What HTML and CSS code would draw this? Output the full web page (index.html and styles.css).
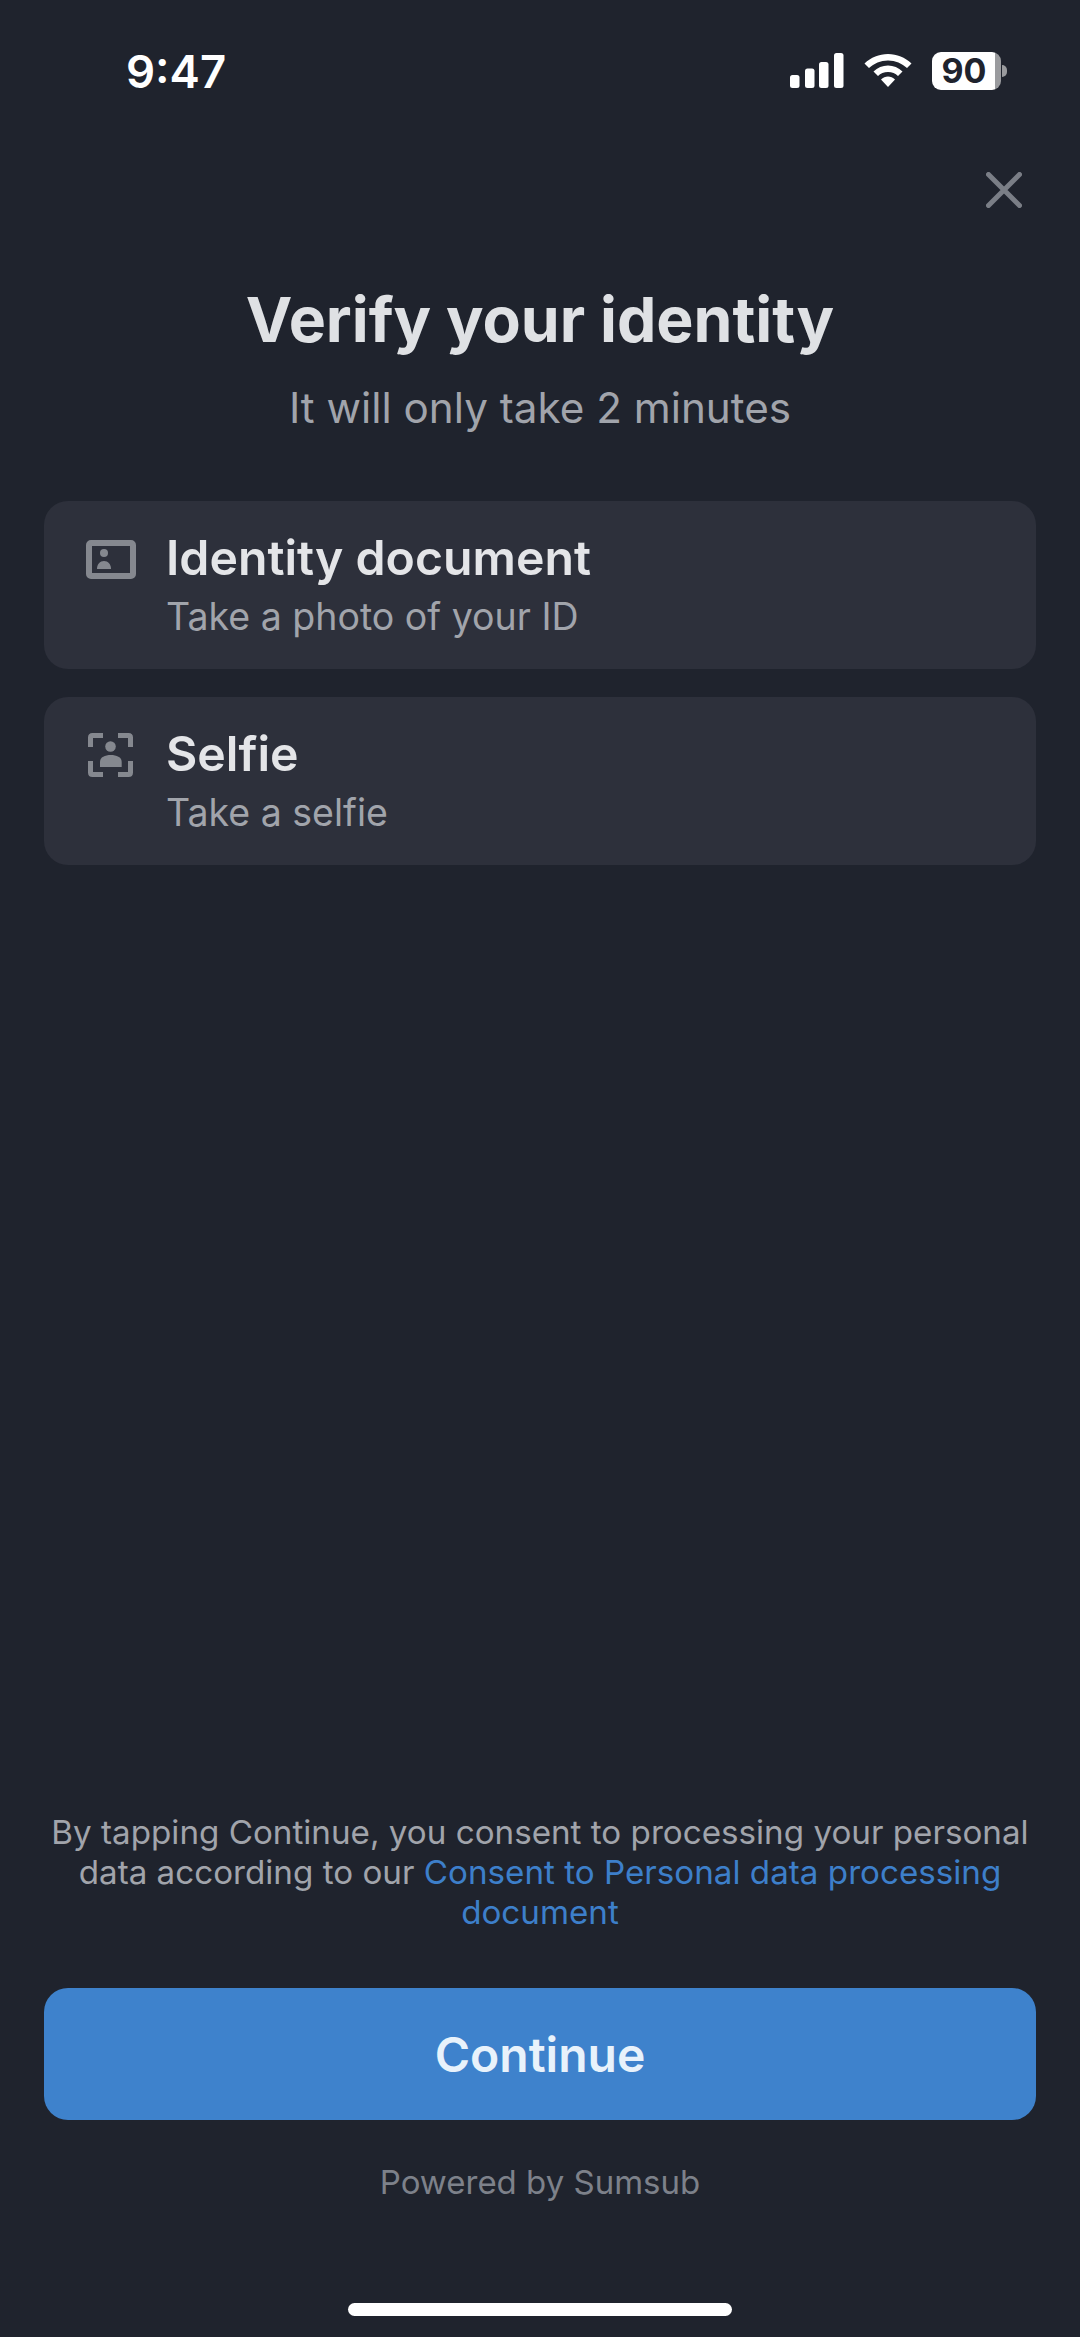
FILE: index.html
```html
<!DOCTYPE html>
<html lang="en">
<head>
<meta charset="utf-8">
<title>Verify your identity</title>
<link rel="stylesheet" href="styles.css">
</head>
<body>
<div class="screen">
  <header class="status">
    <span class="time">9:47</span>
    <div class="status-icons">
      <svg class="signal" width="54" height="36" viewBox="0 0 54 36"><rect x="0" y="22" width="9.500" height="13" rx="2.500"/><rect x="15" y="15.500" width="9.500" height="19.500" rx="2.500"/><rect x="29" y="9" width="9.500" height="26" rx="2.500"/><rect x="44" y="0" width="9.500" height="35" rx="2.500"/></svg>
      <svg class="wifi" width="48" height="36" viewBox="0 0 48 36"><path d="M24 1C33 1 41 4.500 47.500 10.500L43 15C38 10.500 31.500 7.500 24 7.500C16.500 7.500 10 10.500 5 15L0.500 10.500C7 4.500 15 1 24 1Z"/><path d="M24 12.500C29.500 12.500 34.500 14.500 38.500 18.500L34 23C31.500 20.500 28 19 24 19C20 19 16.500 20.500 14 23L9.500 18.500C13.500 14.500 18.500 12.500 24 12.500Z"/><path d="M24 23.500C26.500 23.500 29 24.500 31 26.500L24 34L17 26.500C19 24.500 21.500 23.500 24 23.500Z"/></svg>
      <div class="battery"><div class="battery-body"><span class="battery-level">90</span></div><span class="battery-cap"></span></div>
    </div>
  </header>
  <div class="close-row">
    <svg width="36" height="36" viewBox="0 0 36 36" fill="none"><path d="M2.500 2.500L33.500 33.500M33.500 2.500L2.500 33.500" stroke="#7a7e86" stroke-width="5" stroke-linecap="round"/></svg>
  </div>
  <h1 class="title">Verify your identity</h1>
  <p class="subtitle">It will only take 2 minutes</p>
  <div class="steps">
    <div class="step">
      <svg class="step-icon" width="52" height="46" viewBox="0 0 52 46"><rect x="3" y="8" width="44" height="33" rx="2" fill="none" stroke="#85888f" stroke-width="6"/><circle cx="18" cy="18" r="4" fill="#85888f"/><path d="M11 34C11 29 14 26 18 26C22 26 25 29 25 34Z" fill="#85888f"/></svg>
      <div class="step-text">
        <div class="step-title">Identity document</div>
        <div class="step-sub">Take a photo of your ID</div>
      </div>
    </div>
    <div class="step">
      <svg class="step-icon" width="52" height="46" viewBox="0 0 52 46" fill="none"><path d="M4.500 16V6.500Q4.500 4.500 6.500 4.500H17M32 4.500H42.500Q44.500 4.500 44.500 6.500V16M4.500 30V41.500Q4.500 43.500 6.500 43.500H17M32 43.500H42.500Q44.500 43.500 44.500 41.500V30" stroke="#85888f" stroke-width="5"/><circle cx="24.500" cy="15.500" r="5.300" fill="#85888f"/><path d="M14 36V31C14 26 19 24 24.800 24C30.500 24 35.700 26 35.700 31V36Z" fill="#85888f"/></svg>
      <div class="step-text">
        <div class="step-title">Selfie</div>
        <div class="step-sub">Take a selfie</div>
      </div>
    </div>
  </div>
  <div class="spacer"></div>
  <p class="consent">By tapping Continue, you consent to processing your personal data according to our <a class="link">Consent to Personal data processing document</a></p>
  <button class="cta">Continue</button>
  <p class="powered">Powered by Sumsub</p>
  <div class="home-wrap"><div class="home"></div></div>
</div>
</body>
</html>
```

FILE: styles.css
```css
* { box-sizing: border-box; }
html, body { margin: 0; padding: 0; }
body { background: #1f232d; font-family: Inter, "Noto Sans", sans-serif; }
.screen { width: 1080px; height: 2337px; display: flex; flex-direction: column; background: #1f232d; color: #e4e5e8; overflow: hidden; }
.status { height: 144px; display: flex; justify-content: space-between; align-items: flex-start; padding: 46px 0 0 126px; flex: none; }
.time { font-size: 45.500px; line-height: 52px; font-weight: 600; color: #fff; }
.status-icons { display: flex; align-items: center; gap: 20px; padding-right: 73px; padding-top: 6px; }
.signal, .wifi { fill: #fff; display: block; }
.battery { display: flex; align-items: center; gap: 1px; }
.battery-body { width: 69px; height: 38px; border-radius: 9px; background: linear-gradient(90deg, #fff 0, #fff 91%, #9a9b9e 91%); display: flex; align-items: center; justify-content: center; padding-right: 5px; }
.battery-level { font-size: 34px; font-weight: 700; color: #1f232d; line-height: 1; }
.battery-cap { width: 5px; height: 12px; border-radius: 0 6px 6px 0; background: #9a9b9e; }
.close-row { display: flex; justify-content: flex-end; padding: 28px 58px 0 0; flex: none; }
.close-row svg { display: block; }
.title { margin: 73px 0 0; font-size: 62.500px; line-height: 76px; font-weight: 700; text-align: center; color: #dfe1e4; }
.subtitle { margin: 27px 0 0; font-size: 42.200px; line-height: 48px; font-weight: 400; text-align: center; color: #a1a4ab; }
.steps { display: flex; flex-direction: column; gap: 28px; padding: 0 44px; margin-top: 69px; }
.step { height: 168px; border-radius: 24px; background: #2d303b; display: flex; align-items: flex-start; padding: 34px 0 0 42px; gap: 28px; }
.step-icon { display: block; flex: none; }
.step-text { margin-top: -1px; }
.step-title { font-size: 48.200px; line-height: 48px; font-weight: 600; color: #e4e5e8; }
.step-sub { margin-top: 12px; font-size: 37.500px; line-height: 46px; color: #a1a4ab; }
.spacer { flex: 1; }
.consent { margin: 0; padding: 0 44px; font-size: 33.200px; line-height: 40px; text-align: center; color: #a1a4ab; }
.link { color: #3d7fca; }
.cta { margin: 56px 44px 0; height: 132px; border: none; border-radius: 24px; background: #3e82cc; color: #e8f2fb; font-family: inherit; font-size: 48px; font-weight: 600; }
.powered { margin: 42px 0 0; font-size: 33px; line-height: 40px; text-align: center; color: #7d818a; }
.home-wrap { display: flex; justify-content: center; padding: 101px 0 21px; }
.home { width: 384px; height: 13px; border-radius: 7px; background: #fff; }
```
